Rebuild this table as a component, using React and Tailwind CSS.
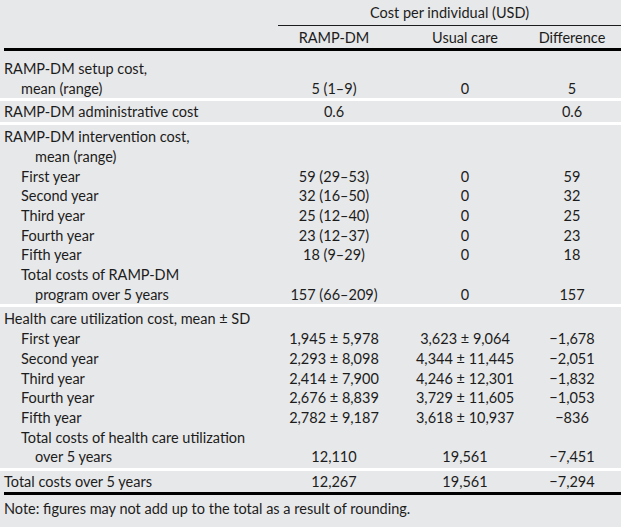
const blocks = [
  {
    pt: 'pt-[8px]',
    rows: [
      { label: 'RAMP-DM setup cost,', indent: 0 },
      { label: 'mean (range)', indent: 1, v: ['5 (1–9)', '0', '5'] },
    ],
  },
  {
    pt: 'pt-[1px]',
    rows: [{ label: 'RAMP-DM administrative cost', indent: 0, v: ['0.6', '', '0.6'] }],
  },
  {
    pt: 'pt-[2px]',
    rows: [
      { label: 'RAMP-DM intervention cost,', indent: 0 },
      { label: 'mean (range)', indent: 2 },
      { label: 'First year', indent: 1, v: ['59 (29–53)', '0', '59'] },
      { label: 'Second year', indent: 1, v: ['32 (16–50)', '0', '32'] },
      { label: 'Third year', indent: 1, v: ['25 (12–40)', '0', '25'] },
      { label: 'Fourth year', indent: 1, v: ['23 (12–37)', '0', '23'] },
      { label: 'Fifth year', indent: 1, v: ['18 (9–29)', '0', '18'] },
      { label: 'Total costs of RAMP-DM', indent: 1 },
      { label: 'program over 5 years', indent: 2, v: ['157 (66–209)', '0', '157'] },
    ],
  },
  {
    pt: 'pt-[2px] pb-[1px]',
    rows: [
      { label: 'Health care utilization cost, mean ± SD', indent: 0 },
      { label: 'First year', indent: 1, v: ['1,945 ± 5,978', '3,623 ± 9,064', '−1,678'] },
      { label: 'Second year', indent: 1, v: ['2,293 ± 8,098', '4,344 ± 11,445', '−2,051'] },
      { label: 'Third year', indent: 1, v: ['2,414 ± 7,900', '4,246 ± 12,301', '−1,832'] },
      { label: 'Fourth year', indent: 1, v: ['2,676 ± 8,839', '3,729 ± 11,605', '−1,053'] },
      { label: 'Fifth year', indent: 1, v: ['2,782 ± 9,187', '3,618 ± 10,937', '−836'] },
      { label: 'Total costs of health care utilization', indent: 1 },
      { label: 'over 5 years', indent: 2, v: ['12,110', '19,561', '−7,451'] },
    ],
  },
  {
    pt: 'pt-[1px]',
    rows: [{ label: 'Total costs over 5 years', indent: 0, v: ['12,267', '19,561', '−7,294'] }],
  },
];

const indents = ['pl-[4px]', 'pl-[21px]', 'pl-[35px]'];

function Row({ label, indent, v }) {
  return (
    <div className="flex leading-[19.7px] whitespace-nowrap">
      <div className={`w-[268px] ${indents[indent]}`}>{label}</div>
      <div className="w-[132px] text-center">{v ? v[0] : ''}</div>
      <div className="w-[130px] text-center">{v ? v[1] : ''}</div>
      <div className="w-[84px] text-center">{v ? v[2] : ''}</div>
    </div>
  );
}

export default function App() {
  return (
    <div
      className="w-[621px] h-[527px] bg-[#e7e8e9] text-[#1c1c1c] text-[14.5px] overflow-hidden"
      style={{ fontFamily: 'Lato, "Liberation Sans", sans-serif' }}
    >
      <div className="pt-[3px] ml-[278px] pb-[2px] border-b border-[#1c1c1c] text-center leading-[20px]">
        Cost per individual (USD)
      </div>
      <div className="flex leading-[20px] pt-[2px]">
        <div className="w-[268px]"></div>
        <div className="w-[132px] text-center">RAMP-DM</div>
        <div className="w-[130px] text-center">Usual care</div>
        <div className="w-[84px] text-center">Difference</div>
      </div>
      <div className="ml-[4px] h-[3px] bg-black"></div>
      {blocks.map((b, i) => (
        <div key={i}>
          {i > 0 && <div className="h-[3px] bg-white"></div>}
          <div className={b.pt}>
            {b.rows.map((r, j) => (
              <Row key={j} {...r} />
            ))}
          </div>
        </div>
      ))}
      <div className="ml-[4px] h-[3px] bg-black"></div>
      <div className="pl-[4px] pt-[4px] leading-[20px]">
        Note: figures may not add up to the total as a result of rounding.
      </div>
    </div>
  );
}
